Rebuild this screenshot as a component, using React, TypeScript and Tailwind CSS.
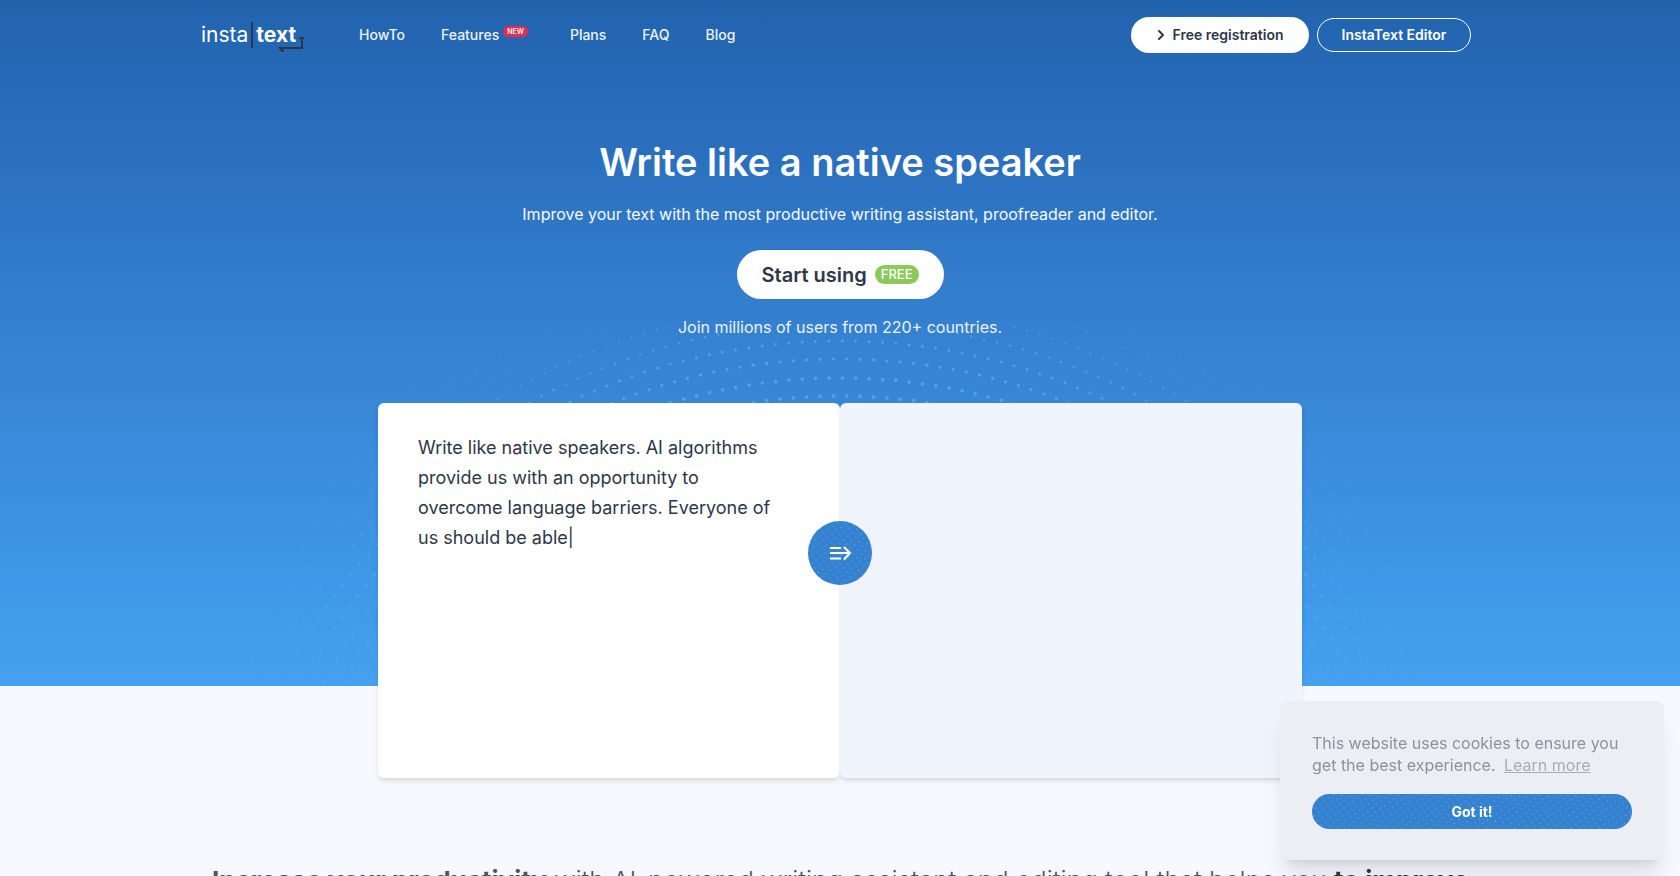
import { ChevronRight } from 'lucide-react';
import React from 'react';

const navLinks = [
  { label: 'HowTo', isNew: false },
  { label: 'Features', isNew: true },
  { label: 'Plans', isNew: false },
  { label: 'FAQ', isNew: false },
  { label: 'Blog', isNew: false },
];

// rings of dots behind the editor, fading out with the distance
const rings = [573, 591, 610, 628, 646, 665, 683, 701, 720].map((radius, i) => ({
  radius,
  size: [3.8, 3.6, 3.2, 2.9, 2.4, 2, 1.6, 1.3, 1][i],
  opacity: [1, 1, 1, 0.95, 0.9, 0.8, 0.65, 0.5, 0.35][i],
}));

function HeroDots() {
  return (
    <svg
      className="absolute bottom-0 left-1/2 -translate-x-1/2"
      width="1440"
      height="360"
      viewBox="-720 -643 1440 360"
      fill="none"
      aria-hidden="true"
    >
      {rings.map(({ radius, size, opacity }) => (
        <circle
          key={radius}
          r={radius}
          stroke="#45a5f3"
          strokeWidth={size}
          strokeLinecap="round"
          strokeDasharray="0.01 13.39"
          opacity={opacity}
        />
      ))}
    </svg>
  );
}

function Speckles({ id }: { id: string }) {
  return (
    <svg className="absolute inset-0 w-full h-full" aria-hidden="true">
      <defs>
        <pattern id={id} width="8" height="8" patternUnits="userSpaceOnUse" patternTransform="rotate(8)">
          <rect x="1" y="1" width="1" height="1" fill="#7fa9d6" />
          <rect x="5" y="5" width="1" height="1" fill="#7fa9d6" />
        </pattern>
      </defs>
      <rect width="100%" height="100%" fill={`url(#${id})`} />
    </svg>
  );
}

function Logo() {
  return (
    <a href="#" className="relative flex items-center w-[106px] h-8 text-[21px] leading-8 text-white">
      <span>insta</span>
      <span className="w-0.5 h-[26px] mx-[3px] bg-[#2d3748]" />
      <span className="font-bold">text</span>
      <svg
        className="absolute right-0.5 -bottom-1"
        width="28"
        height="18"
        viewBox="0 0 28 18"
        fill="none"
        stroke="#2d3748"
        strokeWidth="2"
        aria-hidden="true"
      >
        <path d="M25 1v10H3M22 1h5" />
        <path d="M1 10h5l1 5H4.500z" fill="#2d3748" stroke="none" />
      </svg>
    </a>
  );
}

function Header() {
  return (
    <header className="flex items-center justify-between max-w-[1280px] mx-auto h-[70px] pl-px pr-[9px]">
      <div className="flex items-center">
        <Logo />
        <nav className="flex items-center gap-9 ml-[52px] text-sm font-medium text-[#edf2f7]">
          {navLinks.map(({ label, isNew }) => (
            <a key={label} href="#" className={isNew ? 'flex items-center gap-1 pr-1.5' : ''}>
              {label}
              {isNew && (
                <span className="px-1 mb-2 rounded-full bg-[#e12d50] text-[7px] leading-[11px] font-semibold">
                  NEW
                </span>
              )}
            </a>
          ))}
        </nav>
      </div>
      <div className="flex items-center gap-2 text-sm font-semibold">
        <button className="flex items-center justify-center gap-1 w-[178px] h-9 pr-1 rounded-full bg-white text-[#2d3748]">
          <ChevronRight size={16} strokeWidth={3} />
          Free registration
        </button>
        <button className="w-[154px] h-[34px] rounded-full border border-white text-white">
          InstaText Editor
        </button>
      </div>
    </header>
  );
}

function Demo() {
  return (
    <div className="relative grid grid-cols-2 w-full max-w-[924px] mx-auto -mb-[92px]">
      <div className="h-[375px] px-10 pt-[30px] rounded-md bg-white shadow-md">
        <p className="max-w-[360px] text-lg leading-[30px] text-[#2d3748]">
          Write like native speakers. AI algorithms provide us with an opportunity to overcome
          language barriers. Everyone of us should be able|
        </p>
      </div>
      <div className="h-[375px] rounded-md bg-[#f0f4fc] shadow-md" />
      <button
        aria-label="Improve text"
        className="absolute top-[118px] left-1/2 -translate-x-1/2 flex items-center justify-center w-16 h-16 rounded-full overflow-hidden bg-[#3482d0]"
      >
        <Speckles id="improve-dots" />
        <svg
          className="relative"
          width="24"
          height="16"
          viewBox="0 0 24 16"
          fill="none"
          stroke="white"
          strokeWidth="2"
          aria-hidden="true"
        >
          <path d="M2 3h11M2 8h20M2 13.500h11M16 2l6 6-6 6.500" />
        </svg>
      </button>
    </div>
  );
}

function CookieNotice() {
  return (
    <div className="fixed right-4 bottom-4 w-96 h-[159px] px-8 pt-[31px] rounded-lg bg-[#edeef4] shadow-xl">
      <p className="text-base leading-[22px] text-[#8b919d]">
        This website uses cookies to ensure you get the best experience.{' '}
        <a href="#" className="inline-block ml-1 underline text-[#a9adb6]">
          Learn more
        </a>
      </p>
      <button className="relative w-full h-[35px] mt-[18px] rounded-full overflow-hidden bg-[#3482d0] text-sm font-bold text-white">
        <Speckles id="cookie-dots" />
        <span className="relative">Got it!</span>
      </button>
    </div>
  );
}

export default function App() {
  return (
    <div className="min-h-screen overflow-hidden bg-[#f7f9fe] font-['Inter',sans-serif]">
      <section className="relative bg-[linear-gradient(to_bottom,#2163ad_0%,#2a6ebd_20%,#3480cf_46%,#3a8cdc_66%,#44a1f0_100%)]">
        <HeroDots />
        <div className="relative flow-root">
          <Header />
          <div className="flex flex-col items-center pt-[68px] pb-16 text-center text-white">
            <h1 className="text-[38px] leading-[48px] font-semibold">Write like a native speaker</h1>
            <p className="mt-4 text-base leading-6 text-[#f7fafc]">
              Improve your text with the most productive writing assistant, proofreader and editor.
            </p>
            <button className="flex items-center justify-center gap-2 w-[207px] h-[49px] mt-6 rounded-full bg-white text-xl font-semibold text-[#2d3748]">
              Start using
              <span className="px-1.5 rounded-full bg-[#8cc85c] text-[13px] leading-[19px] font-medium text-white">
                FREE
              </span>
            </button>
            <p className="mt-4 text-base leading-6 text-[#edf2f7]">
              Join millions of users from 220+ countries.
            </p>
          </div>
          <Demo />
        </div>
      </section>
      <section className="max-w-[1280px] mx-auto pt-[177px] px-3">
        <p className="text-center text-[26px] leading-9 whitespace-nowrap font-light text-[#4a5568]">
          <strong className="font-bold">Increase your productivity</strong> with AI-powered writing
          assistant and editing tool that helps you{' '}
          <strong className="font-bold text-[#2d3748]">to improve</strong>
        </p>
      </section>
      <CookieNotice />
    </div>
  );
}
